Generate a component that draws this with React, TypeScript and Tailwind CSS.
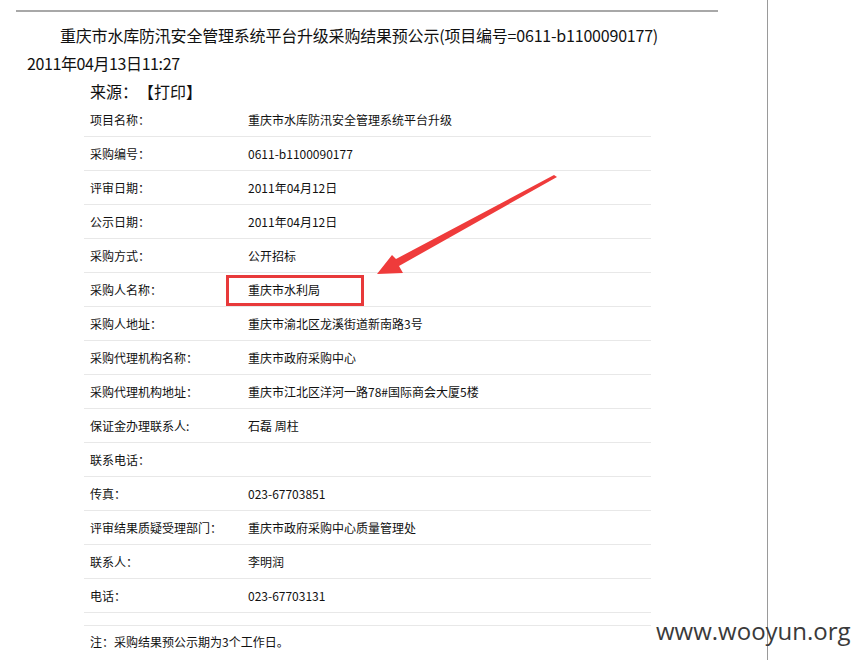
const rows: [string, string][] = [
  ["项目名称：", "重庆市水库防汛安全管理系统平台升级"],
  ["采购编号：", "0611-b1100090177"],
  ["评审日期：", "2011年04月12日"],
  ["公示日期：", "2011年04月12日"],
  ["采购方式：", "公开招标"],
  ["采购人名称：", "重庆市水利局"],
  ["采购人地址：", "重庆市渝北区龙溪街道新南路3号"],
  ["采购代理机构名称：", "重庆市政府采购中心"],
  ["采购代理机构地址：", "重庆市江北区洋河一路78#国际商会大厦5楼"],
  ["保证金办理联系人:", "石磊 周柱"],
  ["联系电话：", ""],
  ["传真：", "023-67703851"],
  ["评审结果质疑受理部门：", "重庆市政府采购中心质量管理处"],
  ["联系人：", "李明润"],
  ["电话：", "023-67703131"],
];

export default function App() {
  return (
    <div
      className="relative flex h-[660px] w-[863px] overflow-hidden bg-white text-[#111]"
      style={{ fontFamily: '"SimSun", "Noto Sans CJK SC", sans-serif' }}
    >
      <div className="relative h-full w-[768px] shrink-0 border-r border-[#9a9a9a]">
        <div className="ml-[16px] mt-[10px] w-[702px] border-t-2 border-[#a8a8a8]" />

        <div className="mt-[12px] h-[22px] pl-[60px] text-[16px] leading-[22px] tracking-[-0.2px] whitespace-nowrap">
          重庆市水库防汛安全管理系统平台升级采购结果预公示(项目编号=0611-b1100090177)
        </div>
        <div className="mt-[6px] h-[22px] pl-[27px] text-[16px] leading-[22px] tracking-[-0.4px]">
          2011年04月13日11:27
        </div>
        <div className="mt-[6px] flex h-[22px] pl-[90px] text-[16px] leading-[22px]">
          <span className="w-[48px]">来源：</span>
          <span>【打印】</span>
        </div>

        <div className="relative ml-[84px] mt-[1px] w-[567px] text-[12px]">
          {rows.map(([label, value]) => (
            <div key={label} className="flex h-[34px] items-center border-b border-[#e8e8e8]">
              <div className="w-[164px] shrink-0 pl-[6px]">{label}</div>
              <div>{value}</div>
            </div>
          ))}
          <div className="mt-[12px] flex h-[32px] items-center border-t border-[#e8e8e8] pl-[6px]">
            注：采购结果预公示期为3个工作日。
          </div>

          {/* red highlight box */}
          <div className="absolute left-[142px] top-[172px] h-[31px] w-[138px] border-[3px] border-[#e8393a]" />
        </div>

        {/* arrow */}
        <svg className="absolute left-0 top-0" width="768" height="660" viewBox="0 0 768 660">
          <polygon
            points="554,175 557,177 399,266 403,273 377,274 392,255 396,259"
            fill="#ef3b3b"
          />
        </svg>
      </div>

      <div
        className="absolute left-[656px] top-[616px] text-[24px] leading-[30px] text-[#3a3a3a]"
        style={{ fontFamily: '"Open Sans", sans-serif' }}
      >
        www.wooyun.org
      </div>
    </div>
  );
}
